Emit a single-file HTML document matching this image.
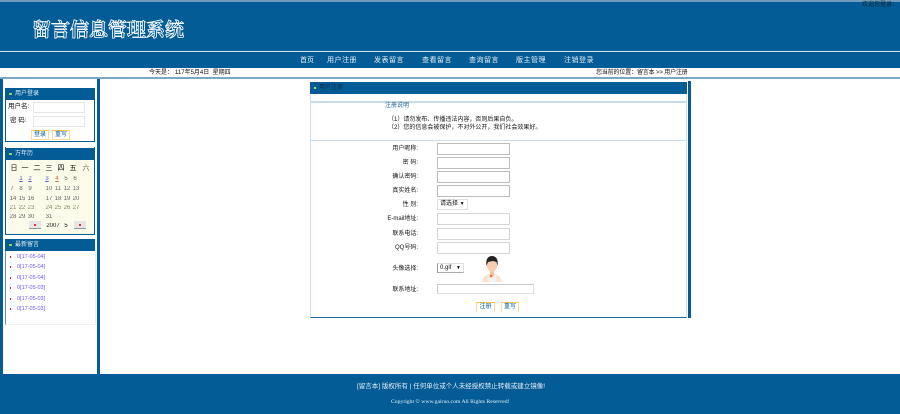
<!DOCTYPE html>
<html><head><meta charset="utf-8">
<style>
html,body{margin:0;padding:0;width:900px;height:414px;overflow:hidden;background:#fff}
body{position:relative;font-family:"Liberation Sans","Noto Sans CJK SC",sans-serif;font-size:6px;color:#111}
.a{position:absolute}
.t{position:absolute;white-space:nowrap;line-height:10px;height:10px;font-size:6px;filter:blur(.25px)}
.b{background:#045c97}
.w{color:#e6eef5}
.n{font-size:7px;letter-spacing:.5px;margin-top:1px}
.in{position:absolute;box-sizing:border-box;background:#fff;border:1px solid #bdbdbd;height:12px;width:73px;left:437px}
.l{position:absolute;white-space:nowrap;line-height:10px;font-size:6px;width:60px;text-align:right;left:358px;color:#111;margin-top:1px;filter:blur(.25px)}
.btn{position:absolute;box-sizing:border-box;background:#fff;border:1px solid #fbdc94;border-top:1px solid #fbc94e;color:#045c97;text-align:center;line-height:9px;font-size:6px;white-space:nowrap}
.cal{position:absolute;font-size:6px;line-height:8px;width:10px;text-align:center;color:#666;margin-top:1px;filter:blur(.2px)}
.li{position:absolute;left:17px;font-size:5.500px;line-height:8px;color:#75f;white-space:nowrap;margin-top:1px}
.dot{position:absolute;left:10px;width:1px;height:2px;background:#e11;margin-top:1px}
</style></head><body>
<div class="a b" style="left:0;top:0;width:900px;height:51px"></div>
<div class="a" style="left:0;top:0;width:900px;height:2px;background:#6f9cbd"></div>
<div class="a" style="left:0;top:51px;width:900px;height:1px;background:#dbe7f0"></div>
<div class="a b" style="left:0;top:52px;width:900px;height:16px"></div>
<div class="t" style="left:32px;top:16px;height:26px;line-height:26px;font-size:19px;font-weight:bold;color:#045c97;font-family:'Noto Serif CJK SC','Noto Sans CJK SC',serif;-webkit-text-stroke:.8px #fff;filter:none">留言信息管理系统</div>
<div class="t" style="left:862px;top:0;color:#123">欢迎您登录： !</div>

<div class="t w n" style="left:300px;top:55px;letter-spacing:0">首页</div>
<div class="t w n" style="left:327px;top:55px">用户注册</div>
<div class="t w n" style="left:374px;top:55px">发表留言</div>
<div class="t w n" style="left:422px;top:55px">查看留言</div>
<div class="t w n" style="left:469px;top:55px">查询留言</div>
<div class="t w n" style="left:516px;top:55px">版主管理</div>
<div class="t w n" style="left:564px;top:55px">注销登录</div>

<div class="t" style="left:149px;top:68px">今天是：</div>
<div class="t" style="left:175px;top:68px">117年5月4日&nbsp; 星期四</div>
<div class="t" style="left:596px;top:68px;letter-spacing:-.15px">您当前的位置：留言本 &gt;&gt; 用户注册</div>
<div class="a" style="left:0;top:77px;width:900px;height:2px;background:#7ba6c4"></div>

<div class="a b" style="left:0;top:79px;width:3px;height:295px"></div>
<div class="a b" style="left:97px;top:79px;width:3px;height:295px"></div>

<!-- login panel -->
<div class="a" style="left:5px;top:88px;width:90px;height:54px;box-sizing:border-box;border:1px solid #045c97;border-top:0"></div>
<div class="a b" style="left:5px;top:88px;width:90px;height:12px"></div>
<div class="a" style="left:9px;top:93px;width:3px;height:2px;background:#8fd06a"></div>
<div class="t w" style="left:15px;top:89px">用户登录</div>
<div class="t" style="left:8px;top:102px;font-size:6.500px">用户名:</div>
<div class="t" style="left:10px;top:116px;font-size:6.500px">密 码:</div>
<div class="a" style="left:33px;top:102px;width:52px;height:11px;box-sizing:border-box;border:1px solid #e6e6e6"></div>
<div class="a" style="left:33px;top:116px;width:52px;height:11px;box-sizing:border-box;border:1px solid #e6e6e6"></div>
<div class="btn" style="left:31px;top:130px;width:18px;height:10px">登录</div>
<div class="btn" style="left:52px;top:130px;width:18px;height:10px">重写</div>

<!-- calendar panel -->
<div class="a" style="left:5px;top:147px;width:90px;height:88px;box-sizing:border-box;border:1px solid #045c97;border-top:0"></div>
<div class="a b" style="left:5px;top:148px;width:90px;height:12px"></div>
<div class="a" style="left:9px;top:153px;width:3px;height:2px;background:#8fd06a"></div>
<div class="t w" style="left:15px;top:149px">万年历</div>
<div class="a" style="left:8px;top:160px;width:84px;height:74px;background:#fafbe8"></div>
<div class="cal" style="left:9px;top:164px;color:#111;font-size:7px">日</div><div class="cal" style="left:20px;top:164px;color:#111;font-size:7px">一</div><div class="cal" style="left:32px;top:164px;color:#111;font-size:7px">二</div><div class="cal" style="left:44px;top:164px;color:#111;font-size:7px">三</div><div class="cal" style="left:56px;top:164px;color:#111;font-size:7px">四</div><div class="cal" style="left:68px;top:164px;color:#111;font-size:7px">五</div><div class="cal" style="left:81px;top:164px;color:#666;font-size:7px">六</div>
<div class="cal" style="left:16px;top:174px;color:#55c;text-decoration:underline">1</div><div class="cal" style="left:25px;top:174px;color:#55c;text-decoration:underline">2</div><div class="cal" style="left:42px;top:174px;color:#55c;text-decoration:underline">3</div><div class="cal" style="left:52px;top:174px;color:#c63;text-decoration:underline">4</div><div class="cal" style="left:61px;top:174px">5</div><div class="cal" style="left:70px;top:174px">6</div>
<div class="cal" style="left:7px;top:184px">7</div><div class="cal" style="left:16px;top:184px">8</div><div class="cal" style="left:25px;top:184px">9</div><div class="cal" style="left:44px;top:184px">10</div><div class="cal" style="left:53px;top:184px">11</div><div class="cal" style="left:62px;top:184px">12</div><div class="cal" style="left:71px;top:184px">13</div>
<div class="cal" style="left:8px;top:194px">14</div><div class="cal" style="left:17px;top:194px">15</div><div class="cal" style="left:26px;top:194px">16</div><div class="cal" style="left:44px;top:194px">17</div><div class="cal" style="left:53px;top:194px">18</div><div class="cal" style="left:62px;top:194px">19</div><div class="cal" style="left:71px;top:194px">20</div>
<div class="cal" style="left:8px;top:203px;color:#886">21</div><div class="cal" style="left:17px;top:203px;color:#886">22</div><div class="cal" style="left:26px;top:203px;color:#886">23</div><div class="cal" style="left:44px;top:203px;color:#886">24</div><div class="cal" style="left:53px;top:203px;color:#886">25</div><div class="cal" style="left:62px;top:203px;color:#886">26</div><div class="cal" style="left:71px;top:203px;color:#886">27</div>
<div class="cal" style="left:8px;top:212px">28</div><div class="cal" style="left:17px;top:212px">29</div><div class="cal" style="left:26px;top:212px">30</div><div class="cal" style="left:44px;top:212px">31</div>
<div class="a" style="left:29px;top:221px;width:12px;height:8px;background:#e6e6e6;border-bottom:1px solid #999;box-sizing:border-box"><div class="a" style="left:5px;top:3px;width:2px;height:2px;background:#d33"></div></div>
<div class="cal" style="left:46px;top:221px;width:14px;color:#222">2007</div><div class="cal" style="left:61px;top:221px;color:#222">5</div>
<div class="a" style="left:74px;top:221px;width:12px;height:8px;background:#e6e6e6;border-bottom:1px solid #999;box-sizing:border-box"><div class="a" style="left:5px;top:3px;width:2px;height:2px;background:#d33"></div></div>

<!-- latest messages -->
<div class="a" style="left:5px;top:239px;width:91px;height:86px;box-sizing:border-box;border:1px solid #f0f0f0;border-left:1px solid #5f90b3"></div>
<div class="a b" style="left:5px;top:239px;width:90px;height:12px"></div>
<div class="a" style="left:9px;top:244px;width:3px;height:2px;background:#8fd06a"></div>
<div class="t w" style="left:15px;top:240px">最新留言</div>
<div class="dot" style="top:255px"></div><div class="li" style="top:252px">0[17-05-04]</div>
<div class="dot" style="top:265px"></div><div class="li" style="top:262px">0[17-05-04]</div>
<div class="dot" style="top:276px"></div><div class="li" style="top:273px">0[17-05-04]</div>
<div class="dot" style="top:286px"></div><div class="li" style="top:283px">0[17-05-03]</div>
<div class="dot" style="top:297px"></div><div class="li" style="top:294px">0[17-05-03]</div>
<div class="dot" style="top:307px"></div><div class="li" style="top:304px">0[17-05-03]</div>

<!-- main panel -->
<div class="a" style="left:310px;top:82px;width:377px;height:236px;box-sizing:border-box;border:1px solid #d3e2ee;border-bottom:1px solid #1e6ba0"></div>
<div class="a b" style="left:310px;top:82px;width:377px;height:12px"></div>
<div class="a" style="left:314px;top:87px;width:2px;height:2px;background:#9fe070"></div>
<div class="t" style="left:319px;top:83px;color:#0b2a44">用户注册</div>
<div class="a" style="left:311px;top:101px;width:375px;height:2px;background:#c8dcea"></div>
<div class="a b" style="left:688px;top:81px;width:3px;height:237px"></div>
<div class="t" style="left:385px;top:101px;color:#1a5f96">注册说明</div>
<div class="t" style="left:388px;top:115px">（1）请勿发布、传播违法内容，否则后果自负。</div>
<div class="t" style="left:388px;top:123px">（2）您的信息会被保护，不对外公开，我们社会效果好。</div>
<div class="a" style="left:311px;top:140px;width:375px;height:1px;background:#c8dcea"></div>

<div class="l" style="top:143px">用户昵称:</div><div class="in" style="top:143px"></div>
<div class="l" style="top:157px">密 码:</div><div class="in" style="top:157px"></div>
<div class="l" style="top:171px">确认密码:</div><div class="in" style="top:171px"></div>
<div class="l" style="top:185px">真实姓名:</div><div class="in" style="top:185px"></div>
<div class="l" style="top:199px">性 别:</div>
<div class="a" style="left:437px;top:199px;width:31px;height:11px;box-sizing:border-box;border:1px solid #e0e0e0;font-size:6px;line-height:9px;padding-left:2px;white-space:nowrap">请选择 <span style="font-size:5px">▼</span></div>
<div class="l" style="top:213px">E-mail地址:</div><div class="in" style="top:213px;border-color:#d6d6d6"></div>
<div class="l" style="top:228px">联系电话:</div><div class="in" style="top:228px;border-color:#d6d6d6"></div>
<div class="l" style="top:242px">QQ号码:</div><div class="in" style="top:242px;border-color:#d6d6d6"></div>
<div class="l" style="top:263px">头像选择:</div>
<div class="a" style="left:437px;top:263px;width:27px;height:10px;box-sizing:border-box;border:1px solid #ddd;border-left-color:#999;border-bottom-color:#aaa;font-size:6px;line-height:8px;padding-left:2px;white-space:nowrap">0.gif <span style="font-size:5px;margin-left:3px">▼</span></div>
<svg class="a" style="left:480px;top:255px" width="24" height="28" viewBox="0 0 24 28">
<path d="M2 27 C3 22 6 20 9 19 L15 19 C18 20 21 22 22 27 Z" fill="#fbe3d2"/>
<path d="M8 20 L9 27 L16 27 L16 20 L14 22 L10 22 Z" fill="#f2f2f2"/>
<path d="M10 15 L14 15 L14 20 L12 22 L10 20 Z" fill="#f1c1a3"/>
<ellipse cx="12" cy="10" rx="5" ry="7" fill="#f6cdb0"/>
<path d="M6.500 11 C5.500 4 8 1 12 1 C16 1 18.500 4 17.500 11 L16.500 7 L13 6 L8 7 Z" fill="#222"/>
<circle cx="11" cy="21" r="1.300" fill="#f0703a"/>
</svg>
<div class="l" style="top:284px">联系地址:</div>
<div class="a" style="left:437px;top:284px;width:97px;height:10px;box-sizing:border-box;border:1px solid #e2e2e2;border-left-color:#c8c8c8;border-top-color:#c8c8c8"></div>
<div class="btn" style="left:476px;top:302px;width:19px;height:10px;border-bottom:0">注册</div>
<div class="btn" style="left:501px;top:302px;width:18px;height:10px;border-bottom:0">重写</div>

<!-- footer -->
<div class="a b" style="left:0;top:374px;width:900px;height:40px"></div>
<div class="t w" style="left:357px;top:382px;font-size:6.500px">[留言本] 版权所有 | 任何单位或个人未经授权禁止转载或建立镜像!</div>
<div class="t w" style="left:391px;top:397px;font-size:5.700px;font-family:'Liberation Serif',serif">Copyright © www.gairuo.com All Rights Reserved!</div>
</body></html>
